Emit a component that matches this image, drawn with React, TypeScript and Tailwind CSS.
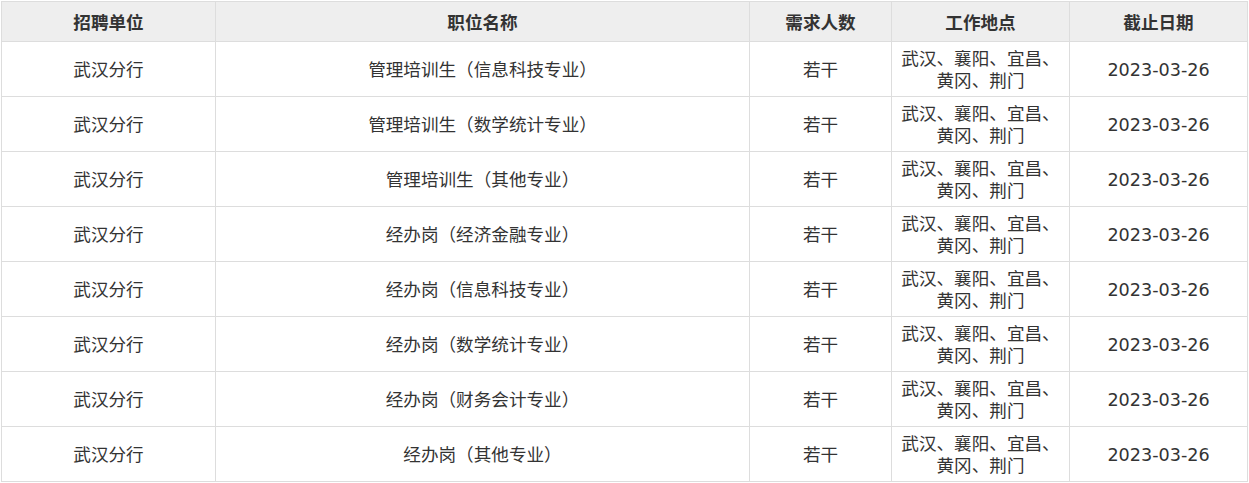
import React from "react";

const rows = [
  "管理培训生（信息科技专业）",
  "管理培训生（数学统计专业）",
  "管理培训生（其他专业）",
  "经办岗（经济金融专业）",
  "经办岗（信息科技专业）",
  "经办岗（数学统计专业）",
  "经办岗（财务会计专业）",
  "经办岗（其他专业）",
];

const font = {
  fontFamily: '"DejaVu Sans", "Noto Sans CJK SC", sans-serif',
};

const cell = "border border-[#dddddd] text-center align-middle px-2 pt-[2px] pb-0 leading-[22px]";

export default function App() {
  return (
    <div className="bg-white w-[1249px] h-[483px] pl-px pt-px" style={font}>
      <table className="table-fixed border-collapse w-[1246px] text-[17.6px] text-[#333]">
        <colgroup>
          <col className="w-[214px]" />
          <col className="w-[534px]" />
          <col className="w-[142px]" />
          <col className="w-[178px]" />
          <col className="w-[178px]" />
        </colgroup>
        <thead>
          <tr className="h-[40px] bg-[#eeeeee]">
            {["招聘单位", "职位名称", "需求人数", "工作地点", "截止日期"].map((h) => (
              <th
                key={h}
                className="border border-[#dddddd] font-bold text-center align-middle px-0 pt-[2px] pb-0 leading-[22px]"
              >
                {h}
              </th>
            ))}
          </tr>
        </thead>
        <tbody>
          {rows.map((r, i) => (
            <tr key={i} className="h-[55px]">
              <td className={cell}>武汉分行</td>
              <td className={cell}>{r}</td>
              <td className={cell}>若干</td>
              <td className={cell}>武汉、襄阳、宜昌、黄冈、荆门</td>
              <td className={cell}>2023-03-26</td>
            </tr>
          ))}
        </tbody>
      </table>
    </div>
  );
}
